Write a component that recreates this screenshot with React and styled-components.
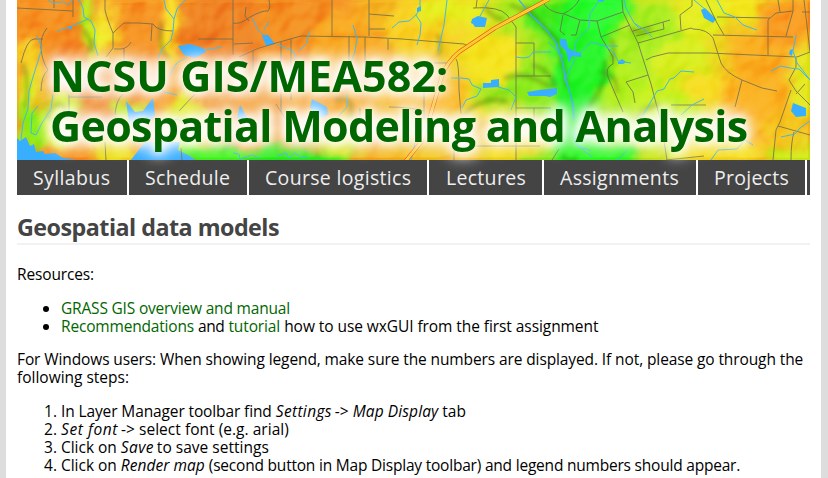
import React from 'react';
import styled, { createGlobalStyle } from 'styled-components';

const GlobalStyle = createGlobalStyle`
  * { box-sizing: border-box; }
  html { height: 100%; overflow: hidden; background: #dddddd; }
  body { margin: 0; height: 100%; font-family: "Open Sans", "Noto Sans", sans-serif; font-size: 15.5px; line-height: 18px; color: #000; }
`;

const Page = styled.div`
  width: 815px;
  height: 478px;
  margin-left: 6px;
  padding: 0 11px;
  background: #fff;
  overflow: hidden;
`;

const Header = styled.header`
  position: relative;
  z-index: 1;
  display: grid;
  height: 160px;
  > * { grid-area: 1 / 1; }
`;

const Terrain = styled.svg`
  display: block;
  width: 793px;
  height: 160px;
`;

const Relief = styled.rect`
  mix-blend-mode: soft-light;
`;

const SiteTitle = styled.h1`
  z-index: 1;
  margin: 0;
  padding: 51px 0 0 33px;
  font-size: 43px;
  line-height: 50px;
  font-weight: 700;
  color: #006600;
  white-space: nowrap;
  text-shadow: 0 0 8px #fff, 0 0 12px #fff, 0 0 16px #fff, 0 0 20px #fff, 0 0 20px #fff;
`;

const TitleLine = styled.span`
  display: block;
  letter-spacing: ${(p) => p.$track}px;
`;

const Run = styled.span`
  letter-spacing: ${(p) => p.$track}px;
`;

const Term = styled.em`
  font-style: italic;
  letter-spacing: ${(p) => p.$track}px;
  margin-right: ${(p) => p.$gap || 0}px;
`;

const Link = styled.a`
  color: #006600;
  text-decoration: none;
  letter-spacing: ${(p) => p.$track}px;
`;

const Nav = styled.nav`
  display: flex;
  height: 35px;
  background: #444444;
  overflow: hidden;
`;

const NavItem = styled.a`
  flex: none;
  width: ${(p) => p.$width}px;
  padding-left: ${(p) => p.$inset || 16}px;
  border-right: 2px solid #fff;
  color: #eeeeee;
  font-size: 19.5px;
  line-height: 35px;
  letter-spacing: ${(p) => p.$track}px;
  white-space: nowrap;
  text-decoration: none;
`;

const SectionTitle = styled.h2`
  height: 30px;
  margin: 20px 0;
  border-bottom: 2px solid #f2f2f2;
  color: #444444;
  font-size: 23.3px;
  line-height: 25px;
  font-weight: 700;
  letter-spacing: -0.52px;
  white-space: nowrap;
`;

const Paragraph = styled.p`
  margin: 0 0 16px;
  white-space: nowrap;
`;

const Bullets = styled.ul`
  margin: 0 0 15px;
  padding-left: 44px;
  white-space: nowrap;
`;

const Steps = styled.ol`
  margin: 0;
  padding-left: 44px;
  white-space: nowrap;
`;

const navItems = [
  ['Syllabus', 112, 0.38],
  ['Schedule', 120, 0.32],
  ['Course logistics', 180, 0.32],
  ['Lectures', 115, 0.3, 17],
  ['Assignments', 154, 0.31],
  ['Projects', 109, 0.26],
];

const hills = [
  ['#f58c22', 70, 40, 46, 60], ['#f6901f', 40, 15, 35, 28], ['#f08222', 222, 28, 52, 40],
  ['#f69222', 140, 50, 28, 45], ['#f48e20', 308, 20, 48, 42], ['#f28a28', 90, 105, 40, 22],
  ['#f59a28', 235, 108, 58, 25], ['#f9a820', 345, 65, 40, 55], ['#fbb822', 420, 90, 45, 30],
  ['#f8d020', 425, 25, 40, 30], ['#f5e41e', 495, 58, 28, 22], ['#e6ee1c', 450, 14, 34, 14],
  ['#f8dc20', 510, 135, 45, 22], ['#f5c428', 455, 140, 34, 30],
  ['#b8f01a', 88, 16, 8, 30], ['#d5f01c', 96, 42, 7, 22], ['#f4ee28', 108, 30, 7, 30], ['#f8e422', 171, 25, 8, 46],
  ['#f5d022', 30, 75, 14, 40],
  ['#d7f020', 28, 100, 10, 30], ['#8cf018', 32, 126, 20, 22], ['#d8ef1c', 60, 122, 20, 30],
  ['#f0e422', 115, 150, 24, 17], ['#c5f01a', 130, 110, 17, 12], ['#e5ed20', 185, 125, 22, 30],
  ['#4df525', 218, 159, 45, 14], ['#32ee22', 300, 161, 55, 16], ['#e2e924', 344, 138, 22, 22],
  ['#a5ed1d', 525, 12, 35, 16], ['#8deb1c', 542, 88, 42, 22], ['#91e51c', 494, 94, 22, 8],
  ['#43e91c', 562, 20, 35, 22], ['#24f526', 581, 52, 30, 60], ['#22f329', 573, 122, 20, 45],
  ['#26fb2d', 604, 10, 26, 35], ['#30f826', 598, 156, 42, 16], ['#b2ef1b', 636, 92, 33, 48],
  ['#a9ed20', 647, 38, 34, 36], ['#c6f21c', 666, 116, 30, 35], ['#d8ee1e', 681, 65, 30, 30],
  ['#e4ee1e', 702, 15, 26, 24], ['#f7dc21', 706, 91, 25, 22],
  ['#faad1d', 760, 67, 34, 42], ['#f9981e', 787, 21, 30, 22], ['#fbb01f', 752, 115, 32, 34],
  ['#f6df20', 720, 151, 35, 18], ['#e5e820', 804, 84, 15, 38], ['#f6c720', 788, 130, 26, 17],
  ['#f3e91f', 741, 7, 24, 14], ['#d2ec1d', 795, 157, 30, 12],
];

const shades = [
  'M84 29Q92 43 90 51Q96 50 91 38', 'M161 22Q158 55 170 57', 'M48 116Q58 96 66 110Q57 128 48 116',
  'M510 5Q538 14 548 33Q562 40 561 61Q566 72 566 87', 'M524 5L545 28L560 42M532 65Q548 68 556 87',
  'M504 78Q522 72 535 79T553 87', 'M464 115Q484 94 507 102', 'M605 60Q607 78 598 93Q584 111 586 132',
  'M630 28Q642 37 651 27', 'M610 38Q616 49 612 60', 'M484 6Q493 20 504 19', 'M438 34Q443 50 438 56',
  'M562 155Q568 165 577 158', 'M335 100Q355 94 351 119',
  'M635 121Q645 107 659 104', 'M600 72Q618 74 617 93', 'M23 64Q30 79 25 109',
];

const roads = [
  'M17 8L73 11M54 0V8M73 0V17', 'M105 0V10Q107 19 113 33V48L106 57',
  'M113 33Q119 27 124 23H139L153 24Q157 31 173 31', 'M152 24L151 41',
  'M114 49H121Q128 48 131 42M124 48V62', 'M21 63Q27 39 34 39H43M47 28Q40 37 41 48Q42 61 48 70Q41 76 41 91',
  'M233 0V55M198 39H233M233 23Q240 25 250 17Q263 10 268 11Q271 8 269 0M246 7L245 16L249 21',
  'M234 44L253 43M239 57Q258 47 276 43M253 51V70', 'M276 43L301 36L365 37L402 39L464 44L468 46',
  'M332 0V36M369 0V36M369 14L394 16M369 29H385', 'M349 36V70M388 39V50M365 37V70M281 42V112M291 39V100M276 104L286 120',
  'M473 8Q499 6 507 15L516 27V160', 'M516 43H534V76M516 76H551M516 108H551M534 108V137',
  'M477 0L476 8M456 59Q459 62 459 90L461 114', 'M424 70V119M389 107Q409 107 424 111M434 63H451',
  'M542 0Q546 12 564 14L580 20L597 21L623 12', 'M563 15L560 31L565 35M580 20L576 35H571',
  'M579 0Q575 8 563 14', 'M597 21L601 37L613 57L613 64Q605 67 608 77L623 112', 'M601 37L630 25',
  'M622 0L623 12L638 43L651 84L661 122', 'M633 31L670 20M638 43L670 34L691 28L693 29Q707 29 713 38L721 63Q726 73 742 80L762 88L777 91',
  'M636 36L664 29L663 22', 'M646 60L652 57L668 53H709L797 57L810 52M681 30L680 15L692 6V0',
  'M626 82L648 75M626 82L633 92L635 103M742 80L735 107', 'M706 0L717 23L724 35M717 17L770 18M768 55V20L776 13L793 11M713 35L793 37',
  'M793 0V11L786 36M778 0L780 12M804 0L810 52M802 12H810', 'M796 58V67L789 80L796 91L810 105',
  'M791 90L780 122L776 130L773 160M778 126L810 135M794 132Q791 142 791 160M796 94L805 84',
  'M671 105H706M666 160L704 156M664 141L667 160M552 160L559 149',
  'M69 95V113M69 97H102M123 94Q116 100 115 115M105 142L106 160M195 94L179 111M182 160L181 148',
  'M454 146H540M454 146V160M360 108V122',
];

const streams = [
  'M48 0L52 3L64 2L68 5L72 0', 'M79 0L83 8L84 17L91 21L95 30L94 43L98 56',
  'M57 31L70 27L88 19M37 36L42 48L38 61L33 77L29 91L28 109L23 123L21 140',
  'M164 0L166 9L174 19L173 31L171 40L162 49L158 59', 'M185 0L177 9L174 19', 'M38 106L32 113L31 133L36 135L42 123L51 109L53 94',
  'M204 50L212 49L222 47M187 57L177 63L169 76', 'M252 18L258 30L268 39M269 21L264 30',
  'M156 90L177 95M252 90L256 85M233 153L239 154L240 159L252 155L259 158',
  'M277 44L293 51L296 59M309 31L307 43L299 51', 'M353 25L357 38L355 52L350 64',
  'M420 0L420 9L416 15L421 23L420 35L417 45M416 15L409 21L399 22L392 28M447 0L444 25L438 51',
  'M489 0L479 18M451 78H461L469 79L472 85L481 89L477 96L466 100L462 108M498 87L509 90L516 97L511 110',
  'M551 52H533L529 57L523 58L516 57', 'M519 0L532 16L546 29L555 41L563 64L565 79L569 90L574 105L574 120',
  'M548 42L564 57M565 80L574 61L576 41L589 28L590 14L596 5L600 0', 'M578 55L591 42L605 46L618 46',
  'M605 46L614 53L618 61L631 63', 'M624 0L626 8L634 23L645 30L652 37M634 23L639 28',
  'M694 0L706 10M717 0L724 13L735 17L743 25L757 30', 'M694 72L681 71L674 78L670 79L664 89L657 91L649 105',
  'M704 99L692 105L681 115M796 35L793 51L797 63L804 72L810 80', 'M771 71L781 66L790 68L799 69L810 80',
  'M810 121L800 128L795 134L781 137M711 160L718 150L737 149L745 140L753 145',
  'M574 130L576 144L592 157M576 145L591 151M627 151L617 160M649 105L641 119',
  'M169 121L178 119L185 125M347 94L347 107L338 117M277 156L286 153L289 158L295 153L300 157L307 157M411 160L415 143',
];

const highway = 'M549 -1L495 28L459 52Q447 62 442 76L429 120L421 142L405 162';

function TerrainMap() {
  return (
    <Terrain viewBox="17 0 793 160" aria-hidden="true">
      <defs>
        <linearGradient id="ground">
          <stop offset="0" stopColor="#f89824" />
          <stop offset="0.4" stopColor="#f8a222" />
          <stop offset="0.58" stopColor="#f0e01e" />
          <stop offset="0.68" stopColor="#86ed1e" />
          <stop offset="0.84" stopColor="#e8e41e" />
          <stop offset="1" stopColor="#f8bd22" />
        </linearGradient>
        <filter id="soft" filterUnits="userSpaceOnUse" x="-20" y="-40" width="870" height="240" colorInterpolationFilters="sRGB">
          <feGaussianBlur stdDeviation="5" result="b" />
          <feTurbulence type="fractalNoise" baseFrequency="0.035" numOctaves="3" seed="4" result="n" />
          <feDisplacementMap in="b" in2="n" scale="24" xChannelSelector="R" yChannelSelector="G" />
        </filter>
        <filter id="shadow" x="-30%" y="-30%" width="160%" height="160%">
          <feGaussianBlur stdDeviation="2" />
        </filter>
        <filter id="relief" x="0" y="0" width="100%" height="100%" colorInterpolationFilters="sRGB">
          <feTurbulence type="fractalNoise" baseFrequency="0.028" numOctaves="3" seed="8" />
          <feColorMatrix values="0 0 0 0 0  0 0 0 0 0  0 0 0 0 0  1 0 0 0 0" />
          <feGaussianBlur stdDeviation="1" />
          <feDiffuseLighting surfaceScale="14" diffuseConstant="0.76" lightingColor="#ffffff">
            <feDistantLight azimuth="225" elevation="50" />
          </feDiffuseLighting>
        </filter>
      </defs>
      <rect x="17" width="793" height="160" fill="url(#ground)" />
      <g filter="url(#soft)">
        {hills.map(([fill, cx, cy, rx, ry], i) => (
          <ellipse key={i} fill={fill} cx={cx} cy={cy} rx={rx} ry={ry} />
        ))}
      </g>
      <Relief x="17" width="793" height="160" filter="url(#relief)" opacity="0.42" />
      <g filter="url(#shadow)" fill="none" stroke="#304f00" strokeWidth="3.5" opacity="0.36">
        {shades.map((d) => <path key={d} d={d} />)}
      </g>
      <g fill="#38aeff">
        <path d="M17 138L20 141L26 137L30 146L34 144L36 152L43 151L45 154L55 153L63 158L77 160H17Z" />
        <path d="M126 101L135 112L143 111L153 98L155 115L149 123H129Z" />
        <path d="M145 142H180L178 150L190 156L195 160H131L137 152Z" />
        <path d="M178 46L190 44L203 48L206 52L195 58L184 55Z" />
        <path d="M262 35L268 35L275 44L266 46Z" />
        <path d="M240 105L246 116L254 120L249 125L237 118Z" />
        <path d="M312 99L327 107L328 115L320 118L310 108Z" />
        <path d="M472 19L478 16L487 18L485 27L475 27L473 24L471 23Z" />
        <path d="M483 83L491 83V80L499 79V87L483 88Z" />
        <path d="M527 92L539 90L557 88V94L550 97L545 96L529 96Z" />
        <path d="M560 39L566 39L568 48L574 51L581 53V57L572 56L569 63L566 51L560 45Z" />
        <path d="M701 10L705 8L711 14L716 19L713 23L704 18Z" />
        <path d="M793 103L806 108L806 116L796 117L791 111Z" />
        <path d="M618 62L622 59L626 62L623 64H618ZM790 50L793 49L792 56L789 54Z" />
        <path d="M69 26L72 26V29H69ZM417 8L421 6V11L417 12Z" />
        <path d="M598 0H605L602 2L597 1Z" />
      </g>
      <g fill="none" stroke="#6b6b50" strokeWidth="1" opacity="0.8">
        {roads.map((d) => <path key={d} d={d} />)}
      </g>
      <g fill="none" stroke="#47b7e5" strokeWidth="1">
        {streams.map((d) => <path key={d} d={d} />)}
      </g>
      <path d="M519 0L532 16L546 29L557 44L563 64L566 79L571 96L574 120" fill="none" stroke="#3dadf5" strokeWidth="1.1" />
      <g fill="none">
        <path d={highway} stroke="#f25c20" strokeWidth="4.2" />
        <path d={highway} stroke="#ffe332" strokeWidth="2.6" />
        <path d={highway} stroke="#f0902a" strokeWidth="0.5" />
      </g>
    </Terrain>
  );
}

export default function App() {
  return (
    <>
      <GlobalStyle />
      <Page>
        <Header>
          <TerrainMap />
          <SiteTitle>
            <TitleLine $track={0.1}>NCSU GIS/MEA582:</TitleLine>
            <TitleLine $track={-0.69}>Geospatial Modeling and Analysis</TitleLine>
          </SiteTitle>
        </Header>
        <Nav>
          {navItems.map(([label, width, track, inset]) => (
            <NavItem key={label} $width={width} $track={track} $inset={inset}>{label}</NavItem>
          ))}
        </Nav>
        <SectionTitle>Geospatial data models</SectionTitle>
        <Paragraph><Run $track={-0.14}>Resources:</Run></Paragraph>
        <Bullets>
          <li><Link $track={-0.19}>GRASS GIS overview and manual</Link></li>
          <li>
            <Link $track={-0.18}>Recommendations</Link> <Run $track={-0.4}>and</Run> <Link $track={-0.12}>tutorial</Link>{' '}
            <Run $track={-0.07}>how to use wxGUI from the first assignment</Run>
          </li>
        </Bullets>
        <Paragraph>
          <Run $track={-0.11}>For Windows users: When showing legend, make sure the numbers are displayed. If not, please go through the</Run>
          <br />
          <Run $track={-0.01}>following steps:</Run>
        </Paragraph>
        <Steps>
          <li>
            <Run $track={-0.12}>In Layer Manager toolbar find</Run> <Term $track={0.34} $gap={-1}>Settings</Term>{' '}
            <Run $track={0}>-&gt;</Run> <Term $track={0.1}>Map Display</Term> <Run $track={0}>tab</Run>
          </li>
          <li><Term $track={0.59} $gap={-1}>Set font</Term> <Run $track={0.03}>-&gt; select font (e.g. arial)</Run></li>
          <li><Run $track={-0.03}>Click on</Run> <Term $track={0.39} $gap={-1}>Save</Term> <Run $track={0.02}>to save settings</Run></li>
          <li>
            <Run $track={-0.03}>Click on</Run> <Term $track={0.04}>Render map</Term>{' '}
            <Run $track={-0.21}>(second button in Map Display toolbar) and legend numbers should appear.</Run>
          </li>
        </Steps>
      </Page>
    </>
  );
}
